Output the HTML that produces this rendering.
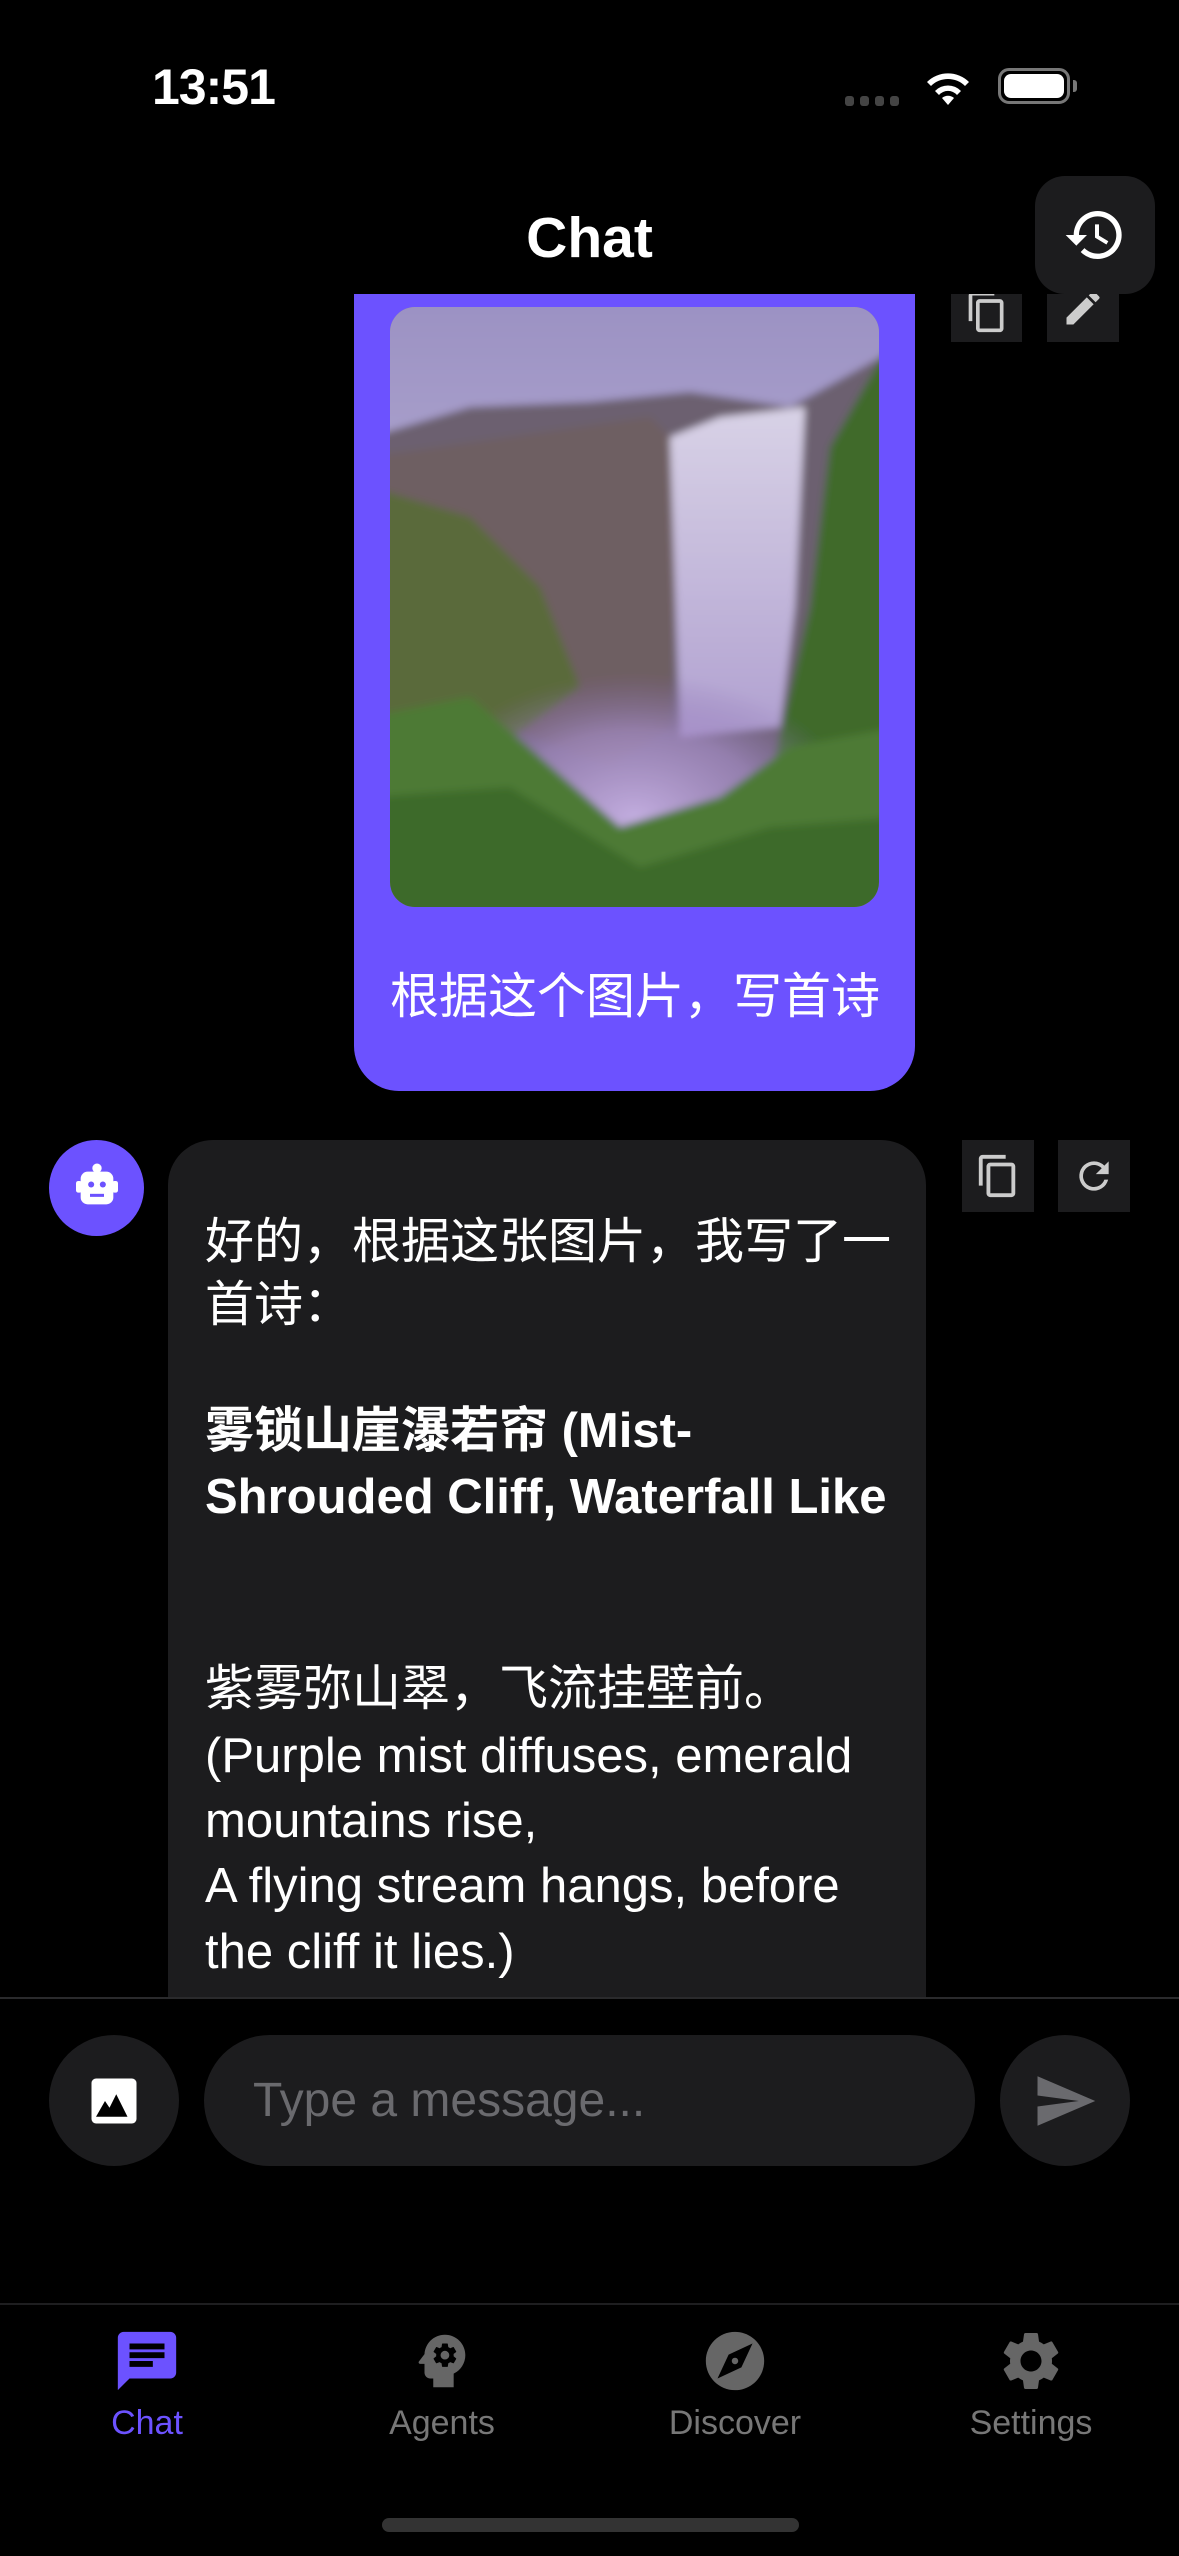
<!DOCTYPE html>
<html><head><meta charset="utf-8">
<style>
*{margin:0;padding:0;box-sizing:border-box}
html,body{width:1179px;height:2556px;background:#000;overflow:hidden;font-family:"Liberation Sans","Noto Sans CJK SC",sans-serif;color:#fff}
.abs{position:absolute}
.ln{position:absolute;left:205px;font-size:49px;white-space:nowrap;line-height:1}
.btn{position:absolute;background:#1c1c1e;display:flex;align-items:center;justify-content:center;overflow:hidden}
</style></head><body>
<div class="abs" style="left:152px;top:58px;font-size:50px;font-weight:bold;letter-spacing:-1px">13:51</div>
<div class="abs" style="left:845px;top:96px;display:flex;gap:6px">
<div style="width:9px;height:10px;border-radius:3px;background:#444"></div><div style="width:9px;height:10px;border-radius:3px;background:#444"></div><div style="width:9px;height:10px;border-radius:3px;background:#444"></div><div style="width:9px;height:10px;border-radius:3px;background:#444"></div></div>
<svg class="abs" style="left:923px;top:67px" width="50" height="40" viewBox="0 0 50 40"><path d="M25 38 L19 31 A9 9 0 0 1 31 31 Z" fill="#fff"/><path d="M12 24 A18 18 0 0 1 38 24 L34 28 A12 12 0 0 0 16 28 Z" fill="#fff"/><path d="M4 15 A30 30 0 0 1 46 15 L42 19 A24 24 0 0 0 8 19 Z" fill="#fff"/></svg>
<div class="abs" style="left:998px;top:68px;width:72px;height:36px;border:3px solid #777;border-radius:11px;padding:3px"><div style="width:100%;height:100%;background:#fff;border-radius:7px"></div></div>
<div class="abs" style="left:1073px;top:80px;width:4px;height:12px;background:#777;border-radius:0 3px 3px 0"></div>

<div class="abs" style="left:0;width:1179px;top:205px;text-align:center;font-size:57px;font-weight:bold">Chat</div>

<div class="abs" style="left:354px;top:294px;width:561px;height:797px;background:#6c52ff;border-radius:0 0 45px 45px"></div>
<div class="abs" style="left:390px;top:307px;width:489px;height:600px;border-radius:25px;overflow:hidden">
<svg width="489" height="600" viewBox="0 0 489 600" preserveAspectRatio="none">
<defs>
<linearGradient id="sky" x1="0" y1="0" x2="0" y2="1"><stop offset="0" stop-color="#9a90c2"/><stop offset="1" stop-color="#d0c8e4"/></linearGradient>
<linearGradient id="fall" x1="0" y1="0" x2="0" y2="1"><stop offset="0" stop-color="#d8d2e6"/><stop offset="1" stop-color="#b0a0d0"/></linearGradient>
<radialGradient id="mist" cx="0.5" cy="0.72" r="0.45"><stop offset="0" stop-color="#c2addf"/><stop offset="0.6" stop-color="#a58cc8" stop-opacity="0.7"/><stop offset="1" stop-color="#8a70b0" stop-opacity="0"/></radialGradient>
<filter id="bl" x="-5%" y="-5%" width="110%" height="110%"><feGaussianBlur stdDeviation="4"/></filter>
</defs>
<rect width="489" height="600" fill="#8a8a70"/>
<g filter="url(#bl)">
<rect x="-20" y="-20" width="529" height="640" fill="url(#sky)"/>
<path d="M-20 130 L80 100 L200 95 L300 85 L400 100 L509 40 L509 620 L-20 620Z" fill="#6c6070"/>
<path d="M-20 150 L120 130 L260 110 L290 140 L280 420 L220 460 L120 420 L-20 430Z" fill="#6e5e62"/>
<path d="M-20 180 L80 210 L150 280 L190 380 L110 440 L-20 440Z" fill="#5a6a3a"/>
<path d="M509 20 L440 140 L420 300 L380 470 L509 500Z" fill="#3f6a2c"/>
<path d="M280 130 L330 110 L415 100 L405 300 L390 420 L290 430Z" fill="url(#fall)"/>
<rect x="0" y="280" width="489" height="320" fill="url(#mist)"/>
<path d="M-20 410 L80 390 L150 450 L230 520 L330 490 L400 440 L509 420 L509 620 L-20 620Z" fill="#4d7a36"/>
<path d="M-20 490 L120 480 L250 560 L380 520 L509 510 L509 620 L-20 620Z" fill="#3c6a2a"/>
</g>
</svg></div>
<div class="abs" style="left:390px;top:957px;font-size:49px;white-space:nowrap">根据这个图片，写首诗</div>

<div class="btn" style="left:1035px;top:176px;width:120px;height:118px;border-radius:30px">
<svg width="64" height="64" viewBox="0 0 24 24"><path fill="#fff" d="M13 3a9 9 0 0 0-9 9H1l3.89 3.89.07.14L9 12H6c0-3.87 3.13-7 7-7s7 3.13 7 7-3.13 7-7 7c-1.93 0-3.68-.79-4.94-2.06l-1.42 1.42A8.954 8.954 0 0 0 13 21a9 9 0 0 0 0-18zm-1 5v5l4.28 2.54.72-1.21-3.5-2.08V8H12z"/></svg></div>
<div class="btn" style="left:951px;top:294px;width:71px;height:48px;align-items:flex-end">
<svg width="44" height="44" viewBox="0 0 24 24" style="margin-bottom:8px"><path fill="#ccc" d="M16 1H4c-1.1 0-2 .9-2 2v14h2V3h12V1zm3 4H8c-1.1 0-2 .9-2 2v14c0 1.1.9 2 2 2h11c1.1 0 2-.9 2-2V7c0-1.1-.9-2-2-2zm0 16H8V7h11v14z"/></svg></div>
<div class="btn" style="left:1047px;top:294px;width:72px;height:48px;align-items:flex-end">
<svg width="44" height="44" viewBox="0 0 24 24" style="margin-bottom:12px"><path fill="#ccc" d="M3 17.25V21h3.75L17.81 9.94l-3.75-3.75L3 17.25zM20.71 7.04a1 1 0 0 0 0-1.41l-2.34-2.34a1 1 0 0 0-1.41 0l-1.83 1.83 3.75 3.75 1.83-1.83z"/></svg></div>

<div class="abs" style="left:49px;top:1140px;width:95px;height:96px;border-radius:50%;background:#6c52ff;display:flex;align-items:center;justify-content:center">
<svg width="56" height="56" viewBox="0 0 24 24"><circle cx="12" cy="3.5" r="2" fill="#fff"/><rect x="5" y="5" width="14" height="14" rx="3" fill="#fff"/><rect x="3" y="9" width="2.5" height="5" rx="1" fill="#fff"/><rect x="18.5" y="9" width="2.5" height="5" rx="1" fill="#fff"/><circle cx="9.5" cy="10.5" r="1.3" fill="#6c52ff"/><circle cx="14.5" cy="10.5" r="1.3" fill="#6c52ff"/><rect x="9" y="14.5" width="6" height="1.3" fill="#6c52ff"/></svg></div>
<div class="abs" style="left:168px;top:1140px;width:758px;height:900px;background:#1c1c1e;border-radius:45px 45px 0 0"></div>
<div class="btn" style="left:962px;top:1140px;width:72px;height:72px">
<svg width="46" height="46" viewBox="0 0 24 24"><path fill="#ccc" d="M16 1H4c-1.1 0-2 .9-2 2v14h2V3h12V1zm3 4H8c-1.1 0-2 .9-2 2v14c0 1.1.9 2 2 2h11c1.1 0 2-.9 2-2V7c0-1.1-.9-2-2-2zm0 16H8V7h11v14z"/></svg></div>
<div class="btn" style="left:1058px;top:1140px;width:72px;height:72px">
<svg width="44" height="44" viewBox="0 0 24 24"><path fill="#ccc" d="M17.65 6.35A7.958 7.958 0 0 0 12 4a8 8 0 1 0 7.73 10h-2.08A6 6 0 1 1 12 6c1.66 0 3.14.69 4.22 1.78L13 11h7V4l-2.35 2.35z"/></svg></div>

<div class="ln" style="top:1218px">好的，根据这张图片，我写了一</div>
<div class="ln" style="top:1281px">首诗：</div>
<div class="ln" style="top:1407px;font-weight:bold">雾锁山崖瀑若帘 (Mist-</div>
<div class="ln" style="top:1473px;font-weight:bold">Shrouded Cliff, Waterfall Like</div>
<div class="ln" style="top:1665px">紫雾弥山翠，飞流挂壁前。</div>
<div class="ln" style="top:1732px">(Purple mist diffuses, emerald</div>
<div class="ln" style="top:1797px">mountains rise,</div>
<div class="ln" style="top:1862px">A flying stream hangs, before</div>
<div class="ln" style="top:1928px">the cliff it lies.)</div>

<div class="abs" style="left:0;top:1997px;width:1179px;height:559px;background:#000;border-top:2px solid #2a2a2c"></div>
<div class="abs" style="left:49px;top:2035px;width:130px;height:131px;border-radius:50%;background:#1c1c1e;display:flex;align-items:center;justify-content:center">
<svg width="54" height="54" viewBox="0 0 24 24"><rect x="2" y="2" width="20" height="20" rx="2" fill="#fff"/><path d="M4 19 L8 12 L10 15 L13 9 L18 19Z" fill="#000"/></svg></div>
<div class="abs" style="left:204px;top:2035px;width:771px;height:131px;border-radius:66px;background:#1c1c1e"></div>
<div class="abs" style="left:253px;top:2073px;font-size:48px;color:#6a6a6e">Type a message...</div>
<div class="abs" style="left:1000px;top:2035px;width:130px;height:131px;border-radius:50%;background:#1c1c1e;display:flex;align-items:center;justify-content:center">
<svg width="66" height="66" viewBox="0 0 24 24"><path fill="#6a6a6e" d="M2.01 21L23 12 2.01 3 2 10l15 2-15 2z"/></svg></div>

<div class="abs" style="left:0;top:2303px;width:1179px;height:2px;background:#1e1e20"></div>
<svg class="abs" style="left:112px;top:2326px" width="70" height="70" viewBox="0 0 24 24"><path fill="#6c52ff" d="M20 2H4c-1.1 0-2 .9-2 2v18l4-4h14c1.1 0 2-.9 2-2V4c0-1.1-.9-2-2-2zM6 9h12v2H6V9zm8 5H6v-2h8v2zm4-6H6V6h12v2z"/></svg>
<svg class="abs" style="left:407px;top:2326px" width="70" height="70" viewBox="0 0 24 24"><path fill="#666" d="M13 3C9.23 3 6.19 5.95 6 9.66l-1.92 2.53c-.24.31 0 .81.4.81H6v3c0 1.11.89 2 2 2h1v3h7v-4.68A7.01 7.01 0 0 0 20 10c0-3.87-3.13-7-7-7zm3 7c0 .13-.01.26-.02.39l.83.66c.08.06.1.16.05.25l-.8 1.39c-.05.09-.16.12-.24.09l-.99-.4c-.21.16-.43.29-.67.39L14 13.83c-.01.1-.1.17-.2.17h-1.6c-.1 0-.18-.07-.2-.17l-.15-1.06c-.25-.1-.47-.23-.68-.39l-.99.4c-.09.03-.2 0-.25-.09l-.8-1.39a.19.19 0 0 1 .05-.25l.84-.66c-.01-.13-.02-.26-.02-.39s.02-.27.04-.39l-.85-.66a.19.19 0 0 1-.05-.26l.8-1.38c.05-.09.15-.12.24-.09l1 .4c.2-.15.43-.29.67-.39L12 6.17c.02-.1.1-.17.2-.17h1.6c.1 0 .18.07.2.17l.15 1.06c.24.1.46.23.67.39l1-.4c.09-.03.2 0 .24.09l.8 1.38c.05.09.03.2-.05.26l-.85.66c.03.12.04.25.04.39zm-3-1.5a1.5 1.5 0 1 0 0 3 1.5 1.5 0 0 0 0-3z"/></svg>
<svg class="abs" style="left:700px;top:2326px" width="70" height="70" viewBox="0 0 24 24"><path fill="#666" d="M12 10.9c-.61 0-1.1.49-1.1 1.1s.49 1.1 1.1 1.1c.61 0 1.1-.49 1.1-1.1s-.49-1.1-1.1-1.1zM12 2C6.48 2 2 6.48 2 12s4.48 10 10 10 10-4.48 10-10S17.52 2 12 2zm2.19 12.19L6 18l3.81-8.19L18 6l-3.81 8.19z"/></svg>
<svg class="abs" style="left:996px;top:2326px" width="70" height="70" viewBox="0 0 24 24"><path fill="#666" d="M19.14 12.94c.04-.3.06-.61.06-.94 0-.32-.02-.64-.07-.94l2.03-1.58a.49.49 0 0 0 .12-.61l-1.92-3.32a.488.488 0 0 0-.59-.22l-2.39.96c-.5-.38-1.03-.7-1.62-.94l-.36-2.54a.484.484 0 0 0-.48-.41h-3.84c-.24 0-.43.17-.47.41l-.36 2.54c-.59.24-1.13.57-1.62.94l-2.39-.96c-.22-.08-.47 0-.59.22L2.74 8.87c-.12.21-.08.47.12.61l2.03 1.58c-.05.3-.09.63-.09.94s.02.64.07.94l-2.03 1.58a.49.49 0 0 0-.12.61l1.92 3.32c.12.22.37.29.59.22l2.39-.96c.5.38 1.03.7 1.62.94l.36 2.54c.05.24.24.41.48.41h3.84c.24 0 .44-.17.47-.41l.36-2.54c.59-.24 1.13-.56 1.62-.94l2.39.96c.22.08.47 0 .59-.22l1.92-3.32c.12-.22.07-.47-.12-.61l-2.01-1.58zM12 15.6c-1.98 0-3.6-1.62-3.6-3.6s1.620-3.6 3.6-3.6 3.6 1.62 3.6 3.6-1.62 3.6-3.6 3.6z"/></svg>
<div class="abs" style="left:47px;width:200px;top:2404px;text-align:center;font-size:34px;color:#6c52ff">Chat</div>
<div class="abs" style="left:342px;width:200px;top:2404px;text-align:center;font-size:34px;color:#777">Agents</div>
<div class="abs" style="left:635px;width:200px;top:2404px;text-align:center;font-size:34px;color:#777">Discover</div>
<div class="abs" style="left:931px;width:200px;top:2404px;text-align:center;font-size:34px;color:#777">Settings</div>
<div class="abs" style="left:382px;top:2518px;width:417px;height:14px;border-radius:7px;background:#333"></div>
</body></html>
